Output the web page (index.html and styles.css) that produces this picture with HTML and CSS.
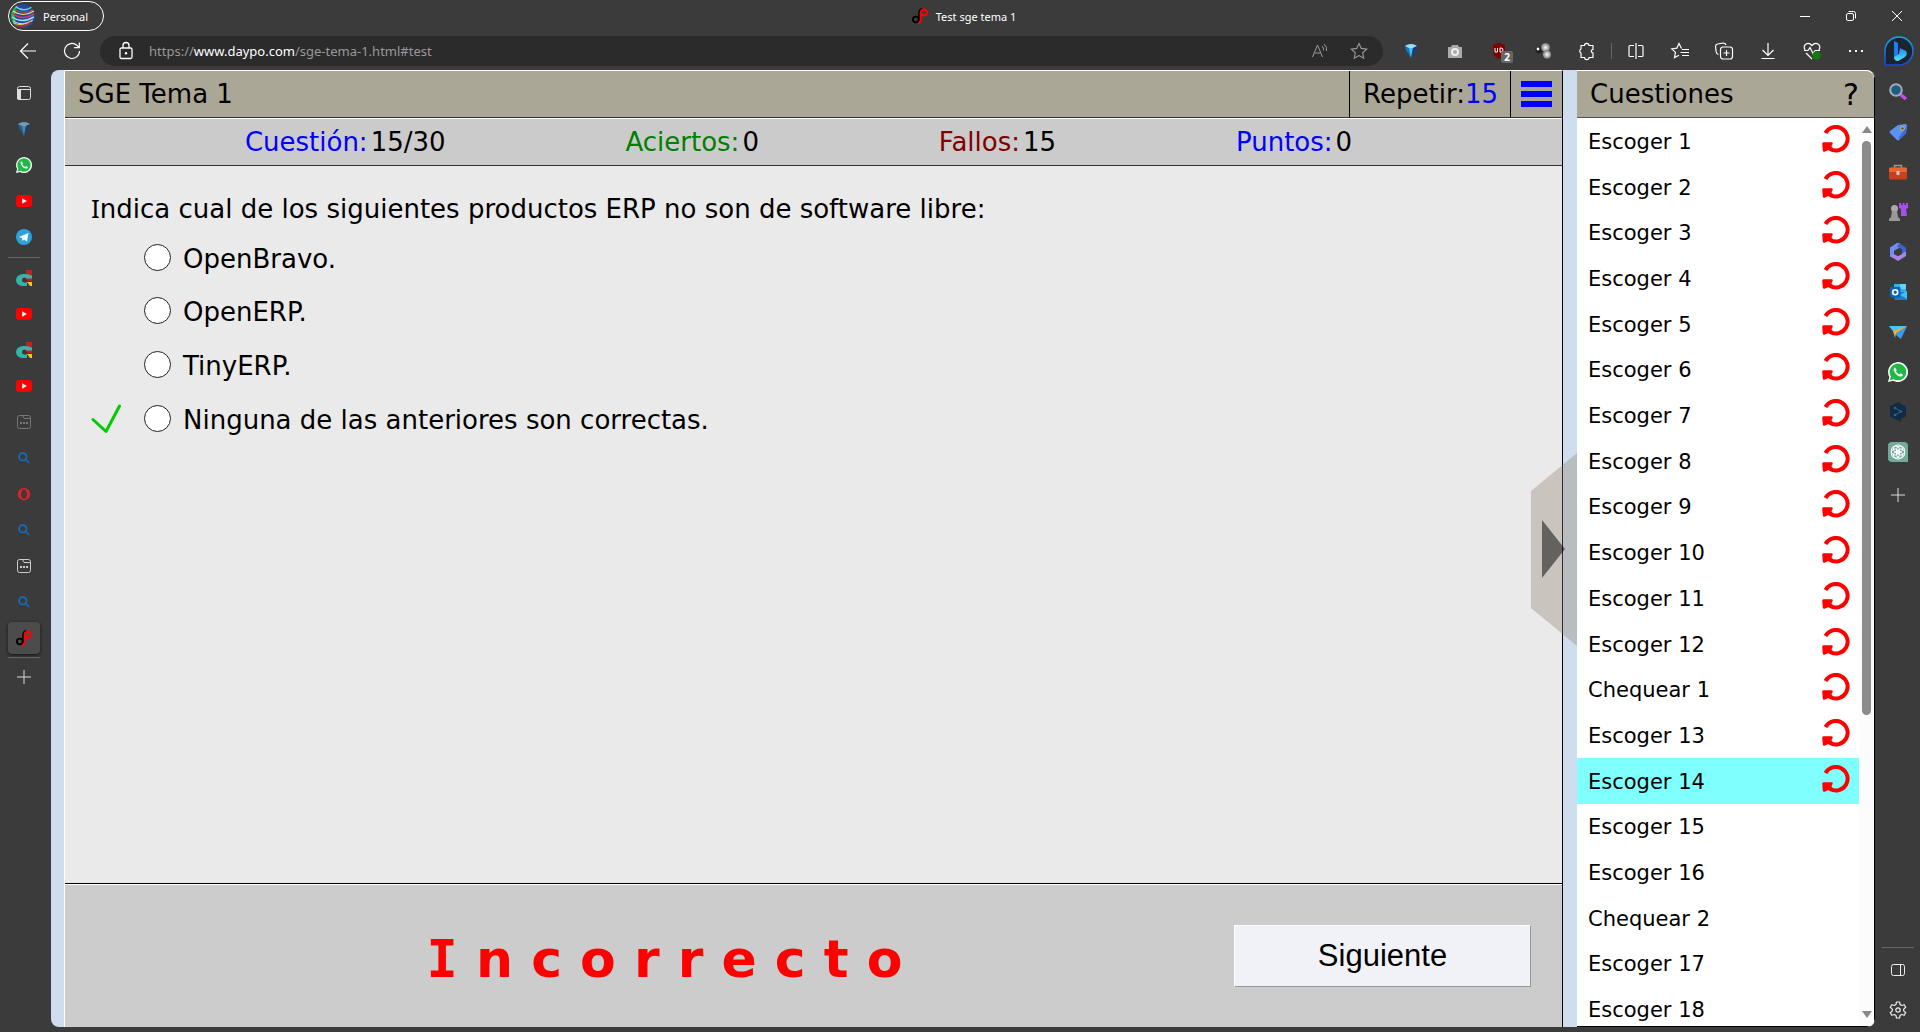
FILE: index.html
```html
<!DOCTYPE html>
<html lang="es">
<head>
<meta charset="utf-8">
<title>Test sge tema 1</title>
<link rel="stylesheet" href="styles.css">
</head>
<body>
<svg class="defs" aria-hidden="true">
  <symbol id="daypo" viewBox="0 0 16 16"><circle cx="3.800" cy="11.500" r="2.900" fill="none" stroke="#000" stroke-width="1.900"/><path d="M7 14V5q0-4 3.500-4" fill="none" stroke="#000" stroke-width="1.600"/><circle cx="12" cy="4.500" r="3" fill="none" stroke="#f00" stroke-width="2"/><path d="M8.800 4v7q0 4-2.800 4" fill="none" stroke="#f00" stroke-width="2"/></symbol>
  <symbol id="whatsapp" viewBox="0 0 16 16"><path d="M0 16l1.100-4A8 8 0 1 1 4.100 15z" fill="#fff"/><path d="M1.500 14.500l.8-2.900A6.700 6.700 0 1 1 4.600 13.800z" fill="#1fb944"/><path d="M5.600 4.300c-1.300.6-1.300 2-.5 3.400 1.200 2.200 3.200 3.900 5 3.900 1.100 0 1.900-.8 1.800-1.700L10 8.900l-1 1C7.800 9.400 6.900 8.500 6.300 7.400l.7-.9z" fill="#fff"/></symbol>
  <symbol id="youtube" viewBox="0 0 16 16"><rect y="2" width="16" height="12" rx="3" fill="#f00"/><path d="M6.200 5.300v5.400L10.800 8z" fill="#fff"/></symbol>
  <symbol id="gem" viewBox="0 0 16 16"><path d="M2 3q6-4 12 0l-1 4-5 8-5-8z" fill="#1678b8"/><path d="M2 3q6-4 12 0L10 5H6z" fill="#9edcf5"/><path d="M6 5h4l-2 10z" fill="#4ac0f2"/><path d="M10 5l4-2-1 4-5 8z" fill="#123f79"/></symbol>
  <symbol id="ctab" viewBox="0 0 16 16"><path d="M10 0h6v11h-4L9 8z" fill="#c81e1e"/><path d="M11 12h5v4h-2z" fill="#f5c518"/><path d="M16 5.500Q12 3.500 7 4 0 5 0 10t6 6h5v-3.500H8.500Q6 12.500 6 10t3-2.500v1h7z" fill="#35b4a9"/><path d="M7 8h3v3H7z" fill="#622"/></symbol>
  <symbol id="blank" viewBox="0 0 16 16"><g fill="none" stroke="currentColor"><rect x="1.500" y="1.500" width="13" height="13" rx="2"/><path d="M7 1.500q0 3 1 3h6.500"/></g><path d="M4 8h2v2H4zM7 8h2v2H7zM10 8h2v2h-2z" fill="currentColor"/></symbol>
  <symbol id="lens" viewBox="0 0 16 16"><g fill="none" stroke="#1270c4" stroke-width="1.700"><circle cx="6.800" cy="6.800" r="3.700"/><path d="M9.500 9.500l3.500 3.500"/></g></symbol>
  <symbol id="opera" viewBox="0 0 16 16"><path fill-rule="evenodd" d="M8 2a6.200 6.200 0 1 0 0 12.400A6.200 6.200 0 1 0 8 2zm0 1.500c1.800 0 3 2 3 4.700s-1.200 4.700-3 4.700-3-2-3-4.700 1.200-4.700 3-4.700z" fill="#e0202c"/></symbol>
  <symbol id="plus" viewBox="0 0 16 16"><path d="M8 1v14M1 8h14" stroke="#ddd" fill="none"/></symbol>
  <symbol id="redo" viewBox="0 0 28 28"><path d="M3.500 8A11.800 11.800 0 1 1 8 24" fill="none" stroke="#f00" stroke-width="4"/><path d="M1.500 18.500H9.500L8 21.500 10 24H5.500L2 25.500z" fill="#f00" stroke="#f00" stroke-width="2.500" stroke-linejoin="round"/></symbol>
</svg>

<header class="titlebar">
  <button class="profile"><svg class="avatar" viewBox="0 0 24 24"><defs><clipPath id="ball"><circle cx="12" cy="12" r="12"/></clipPath></defs><g clip-path="url(#ball)" fill="none"><path d="M0 0h24v24H0z" fill="#24489c"/><path d="M0 0v24h7Q1 12 7 0z" fill="#2aae54"/><path d="M4 2q8 7 17 1" stroke="#6cd5ee" stroke-width="1.500"/><path d="M3 5q9 6 19 1" stroke="#d8453a" stroke-width="1"/><path d="M2 7q10 7 21 0" stroke="#f3e66a" stroke-width="1.200"/><path d="M2 10q10 7 21 0" stroke="#cc3b71" stroke-width="1.500"/><path d="M1 13q10 7 22 0" stroke="#8be3f5" stroke-width="1.500"/><path d="M2 17q9 6 20-1" stroke="#dde" stroke-width="1"/><path d="M2 19q9 4 19-2" stroke="#e8d23c" stroke-width="1"/><path d="M4 21q9 3 16-3" stroke="#d22" stroke-width="1.500"/></g></svg>Personal</button>
  <div class="tab-title"><svg class="i16"><use href="#daypo"/></svg>Test sge tema 1</div>
  <div class="window-buttons">
    <button aria-label="Minimizar"><svg class="i16" viewBox="0 0 16 16"><path d="M3 8.500h10" stroke="#fff"/></svg></button>
    <button aria-label="Restaurar"><svg class="i16" viewBox="0 0 16 16"><g fill="none" stroke="#fff"><rect x="3.500" y="5.500" width="7" height="7" rx="1.500"/><path d="M5.500 3.500h5q2 0 2 2v5"/></g></svg></button>
    <button aria-label="Cerrar"><svg class="i16" viewBox="0 0 16 16"><path d="M3 3l10 10M13 3L3 13" stroke="#fff"/></svg></button>
  </div>
</header>

<nav class="toolbar">
  <button aria-label="Atrás"><svg class="i20" viewBox="0 0 20 20"><path d="M18 10H2.500M10 2.500L2.500 10l7.500 7.500" fill="none" stroke="#fff" stroke-width="1.200"/></svg></button>
  <button aria-label="Actualizar"><svg class="i20" viewBox="0 0 20 20"><path d="M17.500 10A7.500 7.500 0 1 1 14.800 4.200L17 6.500M17.300 1.500v5.200h-5.200" fill="none" stroke="#fff" stroke-width="1.200"/></svg></button>
  <div class="address">
    <svg class="i20" viewBox="0 0 20 20"><g fill="none" stroke="#fff" stroke-width="1.300"><rect x="4" y="7" width="12" height="10.500" rx="1.500"/><path d="M7 7V4.500a3 3 0 0 1 6 0V7"/></g><circle cx="10" cy="12.300" r="1.200" fill="#fff"/></svg>
    <span class="url">https://<b>www.daypo.com</b>/sge-tema-1.html#test</span>
    <button aria-label="Leer en voz alta"><svg class="i20" viewBox="0 0 20 20"><path d="M2.500 16L7.500 4l5 12M4.500 12h6M12 5q2 2 1.500 4.500M14 3q3.500 3 2.500 7" fill="none" stroke="#9a9a9a"/></svg></button>
    <button aria-label="Favorito"><svg class="i20" viewBox="0 0 20 20"><path d="M10 2.500l2.300 4.900 5.400.7-4 3.700 1 5.400-4.700-2.600-4.700 2.600 1-5.400-4-3.700 5.400-.7z" fill="none" stroke="#9a9a9a" stroke-width="1.100"/></svg></button>
  </div>
  <div class="tools">
    <button aria-label="Gema"><svg class="i16"><use href="#gem"/></svg></button>
    <button aria-label="Cámara"><svg class="i16" viewBox="0 0 16 16"><path d="M1 4h3l1-2h6l1 2h3v11H1z" fill="#aaa"/><circle cx="8" cy="9" r="3" fill="none" stroke="#eee" stroke-width="2"/></svg></button>
    <button class="shield" aria-label="uBlock 2"><svg class="i16" viewBox="0 0 16 16"><path d="M8 0l6 2v6q0 5-6 8-6-3-6-8V2z" fill="#800000"/><path d="M4 5v4h2.500V5M9 5v4h1q2 0 2-2t-2-2z" stroke="#fff" fill="none"/></svg><span class="count">2</span></button>
    <button aria-label="Moléculas"><svg class="i16" viewBox="0 0 16 16"><defs><radialGradient id="ballA"><stop stop-color="#fff"/><stop offset="1" stop-color="#777"/></radialGradient></defs><circle cx="4" cy="7" r="3.600" fill="#222"/><circle cx="3" cy="6" r="1.400" fill="#fff"/><circle cx="10.500" cy="4.500" r="4.500" fill="url(#ballA)"/><circle cx="12" cy="11.500" r="4.300" fill="url(#ballA)"/></svg></button>
    <button aria-label="Extensiones"><svg class="i20" viewBox="0 0 20 20"><path d="M4 4.500h3.500a2.200 2.200 0 0 1 4.400 0H16V8.500a1.700 1.700 0 0 0 0 3.400V16.500h-4a2.200 2.200 0 0 1-4.400 0H4v-4.500a2.200 2.200 0 0 1 0-4z" fill="none" stroke="#fff" stroke-width="1.200" stroke-linejoin="round"/></svg></button>
  </div>
  <span class="vline"></span>
  <div class="tools">
    <button aria-label="Pantalla dividida"><svg class="i20" viewBox="0 0 20 20"><path d="M8 4.500H4q-1 0-1 1v9q0 1 1 1h4M12 4.500h4q1 0 1 1v9q0 1-1 1h-4M10 2v16" fill="none" stroke="#fff" stroke-width="1.200"/></svg></button>
    <button aria-label="Favoritos"><svg class="i20" viewBox="0 0 20 20"><path d="M11 6.500L9 2.500 6.800 7.200l-5 .7 3.700 3.500-1 5.300L9 14.200M12 8.500h7M10.500 11.500H19M12 14.500h7M11 6.500l.5 1" fill="none" stroke="#fff" stroke-width="1.200"/></svg></button>
    <button aria-label="Colecciones"><svg class="i20" viewBox="0 0 20 20"><g fill="none" stroke="#fff" stroke-width="1.200"><rect x="6.500" y="6" width="12" height="12" rx="2.500"/><path d="M12.500 9v6M9.500 12h6M4.500 13.500q-2-.5-2.300-2.500L1.500 5.500Q1.500 3.500 3.500 3L9 2q2.500 0 3 2"/></g></svg></button>
    <button aria-label="Descargas"><svg class="i20" viewBox="0 0 20 20"><path d="M10 2v12M4.500 9l5.500 5.500L15.500 9M3.500 17.500h13" fill="none" stroke="#fff" stroke-width="1.200"/></svg></button>
    <button aria-label="Rendimiento"><svg class="i20" viewBox="0 0 20 20"><path d="M3 9q-2-4 1-6t6 1.500Q13 1 16 3t1 6M2 9.500h4l2-3 3 6 2-3h5M4 12l6 6" fill="none" stroke="#fff" stroke-width="1.200"/><circle cx="14.500" cy="14.500" r="4" fill="#107c10"/></svg></button>
    <button aria-label="Más"><svg class="i20" viewBox="0 0 20 20"><path d="M3 9h2v2H3zM9 9h2v2H9zM15 9h2v2h-2z" fill="#fff"/></svg></button>
  </div>
  <button class="bing" aria-label="Bing"><svg viewBox="0 0 32 32"><defs><linearGradient id="bg1" x2="0" y2="1"><stop stop-color="#16a9e8"/><stop offset="1" stop-color="#1c45d8"/></linearGradient><linearGradient id="bg2" x2="0" y2="1"><stop stop-color="#1987f0"/><stop offset="1" stop-color="#5ae2f4"/></linearGradient></defs><path d="M2 30V16A14 14 0 1 1 16 30Z" fill="#1c2430" stroke="url(#bg1)" stroke-width="1.500"/><path d="M11 6l4 2v12l-4 3z" fill="#1a80ef"/><path d="M11 22l5-3 1-6 6 3q2 3-1 6l-7 4q-4 0-4-4z" fill="url(#bg2)"/></svg></button>
</nav>

<div class="workspace">
  <nav class="rail left">
    <button aria-label="Pestañas"><svg class="i16" viewBox="0 0 16 16"><rect x="1.500" y="1.500" width="13" height="13" rx="2" fill="none" stroke="#ddd"/><path d="M1 4.500h14" stroke="#ddd"/><path d="M1 4h4v11H3q-2 0-2-2z" fill="#ddd"/></svg></button>
    <button class="faded" aria-label="Gema"><svg class="i16"><use href="#gem"/></svg></button>
    <button aria-label="WhatsApp"><svg class="i16"><use href="#whatsapp"/></svg></button>
    <button aria-label="YouTube"><svg class="i16"><use href="#youtube"/></svg></button>
    <button aria-label="Telegram"><svg class="i16" viewBox="0 0 16 16"><circle cx="8" cy="8" r="8" fill="#2ca3dd"/><path d="M3 8l9.500-4-1.500 8.500-3-2-1.500 1.500-.5-3z" fill="#fff"/></svg></button>
    <hr>
    <button aria-label="Pestaña"><svg class="i16"><use href="#ctab"/></svg></button>
    <button aria-label="YouTube"><svg class="i16"><use href="#youtube"/></svg></button>
    <button aria-label="Pestaña"><svg class="i16"><use href="#ctab"/></svg></button>
    <button aria-label="YouTube"><svg class="i16"><use href="#youtube"/></svg></button>
    <button class="dim" aria-label="Página"><svg class="i16"><use href="#blank"/></svg></button>
    <button aria-label="Búsqueda"><svg class="i16"><use href="#lens"/></svg></button>
    <button aria-label="Opera"><svg class="i16"><use href="#opera"/></svg></button>
    <button aria-label="Búsqueda"><svg class="i16"><use href="#lens"/></svg></button>
    <button aria-label="Página"><svg class="i16"><use href="#blank"/></svg></button>
    <button aria-label="Búsqueda"><svg class="i16"><use href="#lens"/></svg></button>
    <button class="active" aria-label="Test sge tema 1"><svg class="i16"><use href="#daypo"/></svg></button>
    <hr class="tight">
    <button aria-label="Nueva pestaña"><svg class="i16"><use href="#plus"/></svg></button>
  </nav>

  <div class="page">
    <main class="quiz">
      <header class="quiz-head">
        <h1>SGE Tema 1</h1>
        <button class="repeat">Repetir:<span>15</span></button>
        <button class="menu" aria-label="Menú"><i></i><i></i><i></i></button>
      </header>
      <div class="stats">
        <div class="blue">Cuestión:<b>15/30</b></div>
        <div class="green">Aciertos:<b>0</b></div>
        <div class="maroon">Fallos:<b>15</b></div>
        <div class="blue">Puntos:<b>0</b></div>
      </div>
      <form class="question">
        <p><span class="serif-i">I</span>ndica cual de los siguientes productos ERP no son de software libre:</p>
        <div class="answer"><span class="mark"></span><input type="radio" name="r" id="r1"><label for="r1">OpenBravo.</label></div>
        <div class="answer"><span class="mark"></span><input type="radio" name="r" id="r2"><label for="r2">OpenERP.</label></div>
        <div class="answer"><span class="mark"></span><input type="radio" name="r" id="r3"><label for="r3">TinyERP.</label></div>
        <div class="answer"><span class="mark"><svg viewBox="0 0 30 30"><path d="M2 15.500L15 27.500 28.500 2" fill="none" stroke="#0c0" stroke-width="3" stroke-linecap="round" stroke-linejoin="round"/></svg></span><input type="radio" name="r" id="r4"><label for="r4">Ninguna de las anteriores son correctas.</label></div>
      </form>
      <footer class="result">
        <strong><span class="mono-i">I</span> n c o r r e c t o</strong>
        <button class="next">Siguiente</button>
      </footer>
    </main>
    <div class="gutter"><button class="fold" aria-label="Ocultar lista"><svg viewBox="0 0 46 193"><path d="M0 38L46 0v193L0 155z" fill="#8c826c" fill-opacity=".35"/><path d="M11 67l23 29-23 29z" fill="#000" fill-opacity=".5"/></svg></button></div>
    <aside class="list">
      <header><h2>Cuestiones</h2><button aria-label="Ayuda">?</button></header>
      <div class="scroller">
        <ul>
          <li>Escoger 1<svg><use href="#redo"/></svg></li>
          <li>Escoger 2<svg><use href="#redo"/></svg></li>
          <li>Escoger 3<svg><use href="#redo"/></svg></li>
          <li>Escoger 4<svg><use href="#redo"/></svg></li>
          <li>Escoger 5<svg><use href="#redo"/></svg></li>
          <li>Escoger 6<svg><use href="#redo"/></svg></li>
          <li>Escoger 7<svg><use href="#redo"/></svg></li>
          <li>Escoger 8<svg><use href="#redo"/></svg></li>
          <li>Escoger 9<svg><use href="#redo"/></svg></li>
          <li>Escoger 10<svg><use href="#redo"/></svg></li>
          <li>Escoger 11<svg><use href="#redo"/></svg></li>
          <li>Escoger 12<svg><use href="#redo"/></svg></li>
          <li>Chequear 1<svg><use href="#redo"/></svg></li>
          <li>Escoger 13<svg><use href="#redo"/></svg></li>
          <li class="current">Escoger 14<svg><use href="#redo"/></svg></li>
          <li>Escoger 15</li>
          <li>Escoger 16</li>
          <li>Chequear 2</li>
          <li>Escoger 17</li>
          <li>Escoger 18</li>
        </ul>
        <div class="bar"><span class="up"></span><span class="track"><span class="thumb"></span></span><span class="down"></span></div>
      </div>
    </aside>
  </div>

  <nav class="rail right">
    <button aria-label="Buscar"><svg class="i20" viewBox="0 0 20 20"><path d="M12 12l6 5" stroke="#c44df0" stroke-width="3.500"/><circle cx="8" cy="8" r="5.800" fill="#1d5f80" stroke="#aab" stroke-width="2"/></svg></button>
    <button aria-label="Compras"><svg class="i20" viewBox="0 0 20 20"><path d="M10 3l7-1q2 0 2 2l-1 7-7 7q-1 1-2 0l-7-7q-1-1 0-2z" fill="#5b93f5"/><path d="M11 18l7-7 1-7-8 11z" fill="#3c6be0"/><circle cx="14.500" cy="6.500" r="1.800" fill="#555" stroke="#f5c518"/></svg></button>
    <button aria-label="Herramientas"><svg class="i20" viewBox="0 0 20 20"><path d="M6.500 6V3.500h7V6" stroke="#999" stroke-width="1.500" fill="none"/><rect x="1" y="5.500" width="18" height="12" rx="1.500" fill="#c8401c"/><path d="M1 7q0-1.500 1.500-1.500h15Q19 5.500 19 7v3H1z" fill="#ee6335"/><path d="M8.500 9h3v4h-3z" fill="#ccc"/></svg></button>
    <button aria-label="Juegos"><svg class="i20" viewBox="0 0 20 20"><path d="M11 1h2v2h1.500V1h2v2H18V1h2v5l-2 1 1 7h-6V7l-2-1z" fill="#a94df0"/><circle cx="6.500" cy="6.500" r="3.500" fill="#aaa"/><path d="M4 9h5l1 6 2 2v2H1v-2l2-2z" fill="#999"/></svg></button>
    <button aria-label="Microsoft 365"><svg class="i20" viewBox="0 0 20 20"><path d="M9 1L2 5.500v9L6 16V9l6-3V1z" fill="#6f8df5"/><path d="M11 1l7 4.500v8L14 12V7L9 5z" fill="#3d63cf"/><path d="M2 14l8 5 8-5V9.500L10 14l-4-2z" fill="#a686e6"/><path d="M6 9l5-3 3 1.500V12l-4 2-4-2z" fill="#3b3b3b"/></svg></button>
    <button aria-label="Outlook"><svg class="i20" viewBox="0 0 20 20"><path d="M6 2h12v9H6z" fill="#35b0ee"/><path d="M12 2h6v5h-6z" fill="#62d2fb"/><path d="M5 10h14v8H7z" fill="#1581d2"/><path d="M19 9v8l-7-4z" fill="#42c0f4"/><rect x="2" y="5" width="10.500" height="10.500" rx="1" fill="#0a64b8"/><circle cx="7.200" cy="10.200" r="2.500" fill="none" stroke="#fff" stroke-width="1.600"/></svg></button>
    <button aria-label="Drop"><svg class="i20" viewBox="0 0 20 20"><path d="M1 4h18l-6 13-4-3z" fill="#3c98ee"/><path d="M1 4h18L5 9z" fill="#4cc3f4"/><path d="M5 9l14-5L8 11l-1 5z" fill="#f0b429"/></svg></button>
    <button aria-label="WhatsApp"><svg class="i20"><use href="#whatsapp"/></svg></button>
    <button aria-label="DeepL"><svg class="i20" viewBox="0 0 20 20"><path d="M10 0l8 4.500v10L13 17v3l-4-2-7-3.500v-10z" fill="#0f2b46"/><path d="M7 6l6 3.500-6 3.500" fill="none" stroke="#3c5f80" stroke-width="1"/><g fill="#3c5f80"><circle cx="7" cy="6" r="1.300"/><circle cx="13" cy="9.500" r="1.300"/><circle cx="7" cy="13" r="1.300"/></g></svg></button>
    <button aria-label="ChatGPT"><svg class="i20" viewBox="0 0 20 20"><path d="M4 0h12q4 0 4 4v16H4q-4 0-4-4V4q0-4 4-4z" fill="#74aa9c"/><g fill="none" stroke="#fff" stroke-width="1"><ellipse cx="10" cy="7" rx="4.500" ry="4"/><ellipse cx="10" cy="13" rx="4.500" ry="4"/><ellipse cx="10" cy="7" rx="4.500" ry="4" transform="rotate(60 10 10)"/><ellipse cx="10" cy="13" rx="4.500" ry="4" transform="rotate(60 10 10)"/><ellipse cx="10" cy="7" rx="4.500" ry="4" transform="rotate(120 10 10)"/><ellipse cx="10" cy="13" rx="4.500" ry="4" transform="rotate(120 10 10)"/></g></svg></button>
    <button class="add" aria-label="Añadir"><svg class="i16"><use href="#plus"/></svg></button>
    <div class="bottom">
      <hr>
      <button aria-label="Panel"><svg class="i16" viewBox="0 0 16 16"><g fill="none" stroke="#eee"><rect x="1.500" y="2.500" width="13" height="11" rx="2"/><path d="M10.500 2.500v11"/></g></svg></button>
      <button aria-label="Configuración"><svg class="i20" viewBox="0 0 20 20"><g fill="none" stroke="#eee" stroke-width="1.200" stroke-linejoin="round"><path d="M8.500 2h3l.6 2.600 1.500.9 2.600-.8 1.500 2.600-2 1.800v1.800l2 1.800-1.500 2.600-2.600-.8-1.500.9-.6 2.600h-3l-.6-2.600-1.500-.9-2.600.8-1.500-2.600 2-1.800V9.100l-2-1.800 1.500-2.600 2.600.8 1.500-.9z"/><circle cx="10" cy="10" r="2.200"/></g></svg></button>
    </div>
  </nav>
</div>
</body>
</html>
```
FILE: styles.css
```css
* { box-sizing: border-box; }

body {
  margin: 0;
  height: 100vh;
  display: flex;
  flex-direction: column;
  overflow: hidden;
  background: #3b3b3b;
  color: #fff;
  font-family: "Noto Sans", "Open Sans", sans-serif;
  font-size: 11px;
}

button {
  margin: 0;
  padding: 0;
  border: 0;
  background: none;
  color: inherit;
  font: inherit;
}

h1, h2, p, ul { margin: 0; padding: 0; font-weight: normal; list-style: none; }
svg { display: block; }
.defs { display: none; }
.i16 { width: 16px; height: 16px; }
.i20 { width: 20px; height: 20px; }

/* Browser title bar */
.titlebar {
  display: grid;
  grid-template-columns: 1fr auto 1fr;
  align-items: center;
  height: 32px;
  padding-left: 8px;
}
.profile {
  display: flex;
  align-items: center;
  gap: 8px;
  justify-self: start;
  height: 30px;
  padding: 0 15px 0 2px;
  border: 1px solid #fff;
  border-radius: 15px;
}
.avatar { width: 24px; height: 24px; }
.tab-title { display: flex; gap: 8px; align-items: center; }
.window-buttons { display: flex; justify-self: end; }
.window-buttons button { width: 46px; display: grid; place-items: center; }

/* Toolbar */
.toolbar {
  display: flex;
  align-items: center;
  height: 38px;
  padding-left: 6px;
}
.toolbar > button, .tools button { width: 44px; display: grid; place-items: center; }
.toolbar > .bing { width: 42px; }
.bing svg { width: 32px; height: 32px; }
.tools { display: flex; }
.address {
  flex: 1;
  display: flex;
  align-items: center;
  height: 30px;
  margin: 0 6px;
  padding: 0 14px 0 16px;
  border-radius: 15px;
  background: #2b2b2b;
}
.url { flex: 1; margin-left: 13px; color: #999; font-size: 13px; }
.url b { color: #fff; font-weight: normal; }
.address button + button { margin-left: 19px; }
.vline { width: 1px; height: 16px; margin: 0 2px; background: #666; }
.shield { position: relative; }
.count {
  position: absolute;
  left: 24px;
  top: 10px;
  width: 12px;
  border-radius: 2px;
  background: #666;
  font-size: 10px;
  line-height: 12px;
  font-weight: bold;
}

/* Side rails */
.workspace { flex: 1; display: flex; min-height: 0; padding-bottom: 5px; }
.rail { display: flex; flex-direction: column; align-items: center; flex: none; }
.rail button { flex: none; display: grid; place-items: center; width: 32px; }
.left { width: 51px; padding: 5px 3px 0 0; }
.left button { height: 36px; color: #ccc; }
.left .dim { color: #777; }
.left .faded { opacity: .6; }
.left .active {
  height: 32px;
  margin: 2px 0;
  border-radius: 4px;
  background: #4c4c4c;
  box-shadow: 0 1px 3px #111;
}
.rail hr { width: 32px; height: 1px; margin: 2px 0; border: 0; background: #666; }
.rail hr.tight { margin: 1px 0; }
.right { width: 45px; padding-top: 2px; }
.right button { height: 40px; }
.right .add { height: 46px; }
.bottom { margin: auto 0 -3px; }

/* Page */
.page {
  flex: 1;
  display: flex;
  min-width: 0;
  padding-left: 13px;
  overflow: hidden;
  border-radius: 8px;
  background: #cedeee;
  color: #000;
  font-family: "DejaVu Sans", Verdana, sans-serif;
  font-size: 26px;
}
.quiz {
  flex: 1;
  display: flex;
  flex-direction: column;
  min-width: 0;
  border: solid;
  border-width: 1px 1px 0 1px;
  border-color: #fff #000 #000 #fff;
  background: #eaeaea;
}
.quiz-head { display: flex; height: 47px; border-bottom: 1px solid #333; background: #aaa797; }
h1, h2 { flex: 1; font-size: 26px; line-height: 46px; }
h1 { padding-left: 13px; }
.repeat { padding: 0 12px 0 13px; border-left: 1px solid #000; }
.repeat span { color: #00f; }
.menu {
  display: flex;
  flex-direction: column;
  justify-content: center;
  gap: 4px;
  width: 52px;
  padding: 0 10px;
  border-left: 1px solid #000;
}
.menu i { height: 6px; background: #00f; }

.stats {
  display: flex;
  justify-content: space-evenly;
  height: 48px;
  padding-right: 30px;
  border: solid;
  border-width: 1px 0;
  border-color: #fff #000 #333;
  background: #cbcbcb;
  line-height: 47px;
}
.stats b { margin-left: 3px; color: #000; font-weight: normal; }
.blue { color: #00f; }
.green { color: #008000; }
.maroon { color: #800000; }

.question { flex: 1; padding: 18px 26px; }
.question p { line-height: 48px; }
.serif-i { font-family: "Noto Sans", "DejaVu Sans", sans-serif; }
.answer { display: grid; grid-template-columns: 53px 27px 1fr; align-items: center; height: 54px; }
.question p + .answer { height: 52px; }
.answer label { padding-left: 12px; }
.answer input {
  appearance: none;
  width: 27px;
  height: 27px;
  margin: 0 0 3px;
  border: 1px solid #222;
  border-radius: 50%;
  background: #fff;
}
.mark svg { width: 30px; height: 30px; margin-bottom: 2px; }

.result {
  display: flex;
  align-items: center;
  height: 144px;
  border-top: 1px solid #000;
  box-shadow: inset 0 1px #fff;
  background: #ccc;
}
.result strong {
  flex: 1;
  padding: 6px 0 0 30px;
  text-align: center;
  color: #f00;
  font-size: 52px;
  line-height: 60px;
}
.mono-i { font-family: "DejaVu Sans Mono", monospace; }
.next {
  width: 297px;
  height: 62px;
  margin-right: 31px;
  border: 1px solid;
  border-color: #fff #999 #999 #fff;
  background: #f0f2f7;
  font-family: "Liberation Sans", Arial, sans-serif;
  font-size: 31px;
}

/* Strip between quiz and list, with the folding tab over it */
.gutter { position: relative; flex: none; width: 14px; }
.fold { position: absolute; right: 0; top: 383px; }
.fold svg { width: 46px; height: 193px; }

/* Question list */
.list {
  flex: none;
  display: flex;
  flex-direction: column;
  width: 298px;
  border-right: 1px solid #000;
  border-bottom: 1px solid #000;
  border-radius: 0 8px 8px 0;
  background: #fff;
}
.list header {
  display: flex;
  height: 48px;
  padding: 0 15px 0 13px;
  border-top: 1px solid #fff;
  border-bottom: 1px solid #555;
  background: #aaa797;
  border-radius: 0 8px 0 0;
}
.list header button { font-size: 30px; }
.scroller { flex: 1; display: flex; min-height: 0; overflow: hidden; }
.scroller ul { flex: 1; display: grid; grid-auto-rows: 1fr; margin-bottom: -6px; }
.scroller li {
  display: flex;
  align-items: center;
  justify-content: space-between;
  min-height: 0;
  padding: 2px 9px 0 11px;
  font-size: 21px;
}
.scroller li svg { width: 28px; height: 28px; margin-bottom: 6px; }
.current { background: #80ffff; }
.bar { display: flex; flex-direction: column; align-items: center; width: 15px; padding: 8px 0; background: #fcfcfc; }
.up, .down { border: 5px solid transparent; }
.up { border-top: 0; border-bottom: 7px solid #888; }
.down { border-bottom: 0; border-top: 7px solid #888; }
.track { flex: 1; width: 9px; padding-top: 8px; }
.thumb { display: block; height: 66%; border-radius: 5px; background: #8b8b8b; }
```
